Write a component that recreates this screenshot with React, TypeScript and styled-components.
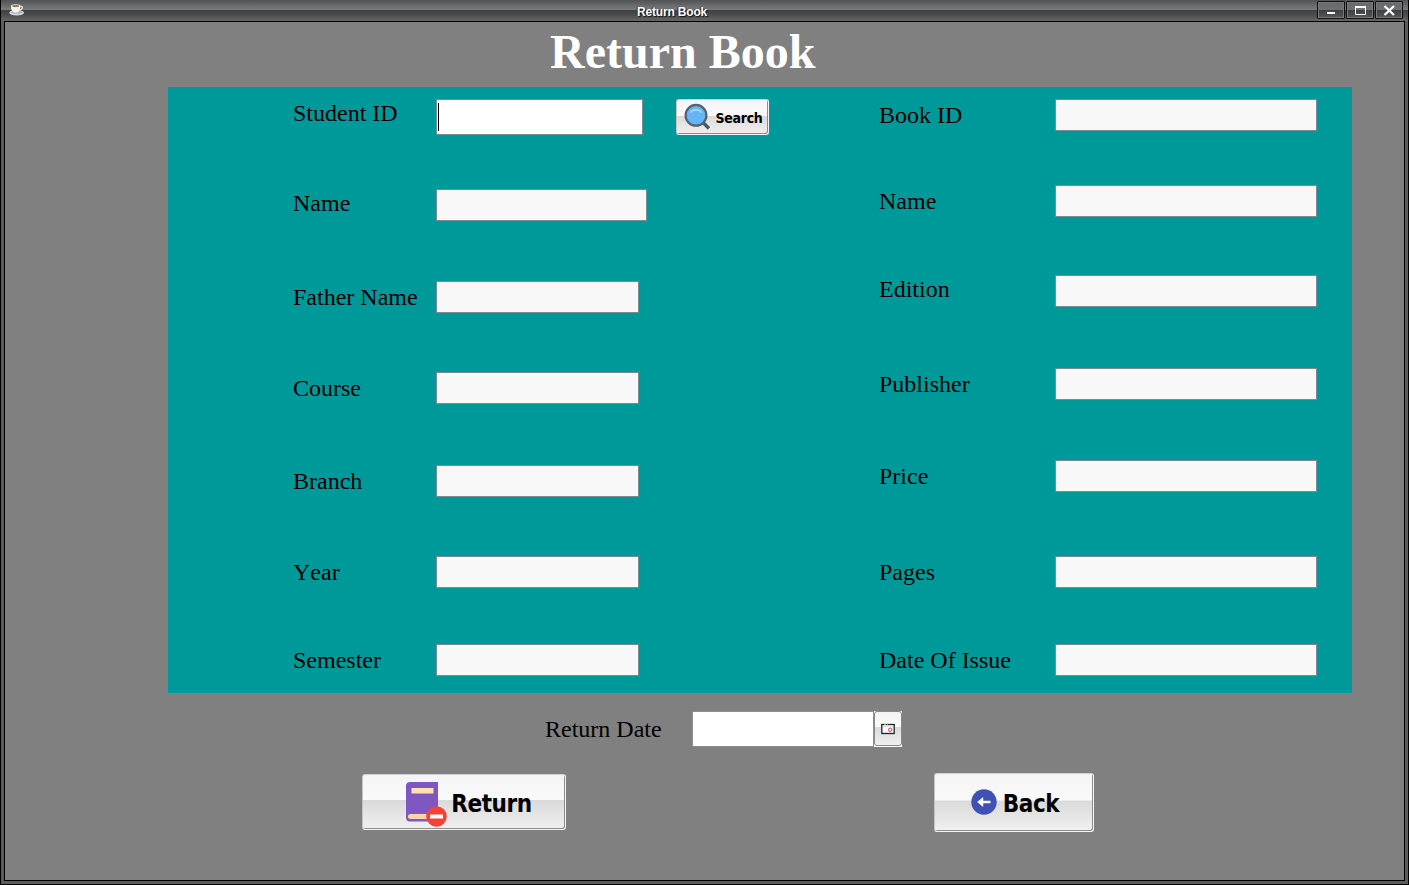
import React from "react";
import styled, { createGlobalStyle } from "styled-components";

const GlobalStyle = createGlobalStyle`
  * { box-sizing: border-box; }
  html, body { margin: 0; padding: 0; overflow: hidden; }
`;

const Window = styled.div`
  display: flex;
  flex-direction: column;
  width: 1409px;
  height: 885px;
  border: solid #000;
  border-width: 0 1px 1px 1px;
  background: #5c5c5c;
  font-kerning: none;
`;

const TitleBar = styled.header`
  display: grid;
  grid-template-columns: 629px 1fr auto;
  height: 21px;
  flex: none;
  padding: 1px 5px 0 7px;
  background: linear-gradient(#505254 0, #77797a 9px, #797b7c 10px, #3f4143 10px, #47494b 14px, #646668 21px);
`;

const WindowTitle = styled.div`
  padding-top: 1px;
  font: bold 12px/21px "Liberation Sans", Arial, sans-serif;
  font-kerning: none;
  letter-spacing: -0.18px;
  color: #fff;
  text-shadow: 1px 1px 1px #111, -1px 0 1px #333;
`;

const WindowButtons = styled.div`
  display: flex;
  justify-content: flex-end;
  gap: 1px;
`;

const WindowButton = styled.button`
  width: 28px;
  height: 18px;
  padding: 0;
  border: 1px solid #111;
  border-radius: 1px;
  box-shadow: inset 0 0 0 1px #77797b;
  background: linear-gradient(#66686a 0, #6f7173 8px, #3d3f41 8px, #55575a 100%);
  svg { display: block; }
`;

const Content = styled.main`
  display: flex;
  flex-direction: column;
  flex: 1;
  margin: 0 3px 3px;
  border: 1px solid #000;
  background: #808080;
`;

const Heading = styled.h1`
  margin: 0;
  height: 65px;
  padding: 2px 0 0 545px;
  font: bold 48px/56px "Liberation Serif", "Times New Roman", serif;
  color: #fff;
`;

const Panel = styled.section`
  display: grid;
  grid-template-columns: 586px 1fr;
  width: 1184px;
  height: 606px;
  margin-left: 163px;
  padding: 12px 0 0 125px;
  background: #009999;
`;

const Column = styled.div`
  display: flex;
  flex-direction: column;
`;

const Row = styled.div<{ $pitch: number; $label: number }>`
  display: grid;
  grid-template-columns: ${(p) => p.$label}px auto auto;
  justify-content: start;
  align-items: start;
  height: ${(p) => p.$pitch}px;
`;

const Label = styled.label<{ $drop?: number }>`
  padding-top: ${(p) => p.$drop ?? 0}px;
  font: 24px/28px "Liberation Serif", "Times New Roman", serif;
  font-kerning: none;
  color: #000;
  white-space: nowrap;
`;

const Field = styled.div<{ $w: number; $h?: number; $active?: boolean }>`
  width: ${(p) => p.$w}px;
  height: ${(p) => p.$h ?? 32}px;
  padding: 3px 1px;
  border: 1px solid #7b8c8c;
  background: ${(p) => (p.$active ? "#fff" : "#f8f8f8")};
`;

const Caret = styled.div`
  width: 1px;
  height: 28px;
  background: #000;
`;

const Button = styled.button<{ $w: number; $h: number; $font?: number; $gap?: number }>`
  display: flex;
  align-items: center;
  justify-content: center;
  gap: ${(p) => p.$gap ?? 0}px;
  width: ${(p) => p.$w}px;
  height: ${(p) => p.$h}px;
  padding: 0;
  border: 1px solid #f4f4f4;
  border-left-color: #c4c4c4;
  border-top-color: #d0d0d0;
  border-radius: 3px;
  box-shadow: inset -1px -1px 0 #8c8c8c;
  background: linear-gradient(#f4f4f4 0, #fafafa 46%, #dadada 47%, #f0f0f0 100%);
  font: bold ${(p) => p.$font ?? 14}px/1 "DejaVu Sans Condensed", Tahoma, sans-serif;
  letter-spacing: -0.4px;
  color: #000;
  svg { flex: none; }
`;

const SearchButton = styled(Button)`
  margin-left: 33px;
  padding: 2px 0 0 1px;
  letter-spacing: -0.3px;
`;

const DateRow = styled.div`
  display: grid;
  grid-template-columns: 147px 182px 28px;
  align-items: start;
  margin: 18px 0 0 540px;
  height: 62px;
`;

const DateField = styled.div`
  height: 36px;
  border: 1px solid #8e8e8e;
  background: #fff;
`;

const DateCorner = styled.div`
  height: 36px;
  background: #fff;
`;

const DateButton = styled(Button)`
  border-color: #888;
  box-shadow: none;
`;

const Actions = styled.div`
  display: flex;
  align-items: flex-start;
  justify-content: space-between;
  width: 732px;
  margin-left: 357px;
`;

const ReturnButton = styled(Button)`
  margin-top: 1px;
  padding: 3px 0 0 9px;
`;

const BackButton = styled(Button)`
  padding: 2px 0 0 2px;
`;

const JavaCup = () => (
  <svg width="18" height="18" viewBox="0 0 18 18">
    <ellipse cx="8.6" cy="11.8" rx="7.4" ry="2.8" fill="#d9dadd" />
    <ellipse cx="8.8" cy="11.2" rx="5.5" ry="1.6" fill="#aeb0b5" />
    <path d="M3 4.8h9.4c.2 3.8-1.4 7-4.6 7S2.8 8.8 3 4.8z" fill="#f3f3f1" />
    <ellipse cx="7.7" cy="4.9" rx="4.7" ry="1.6" fill="#f2efe8" />
    <ellipse cx="7.6" cy="5" rx="3.5" ry="1" fill="#987448" />
    <path d="M12 5.3c3.6-.6 3 3.4-1 3.7" fill="none" stroke="#ececec" strokeWidth="1.2" />
  </svg>
);

const SearchIcon = () => (
  <svg width="28" height="30" viewBox="0 0 28 30">
    <path d="M18.5 19L25 25.5" stroke="#455a64" strokeWidth="3.4" />
    <path d="M17.5 18l2.5 2.5" stroke="#616161" strokeWidth="2" />
    <circle cx="12" cy="12.3" r="10.4" fill="#64b5f6" stroke="#56606b" strokeWidth="2.2" />
    <path d="M6.5 9.6C9 6 15 6 17.5 9.6" fill="none" stroke="#a9d7fb" strokeWidth="1.7" />
  </svg>
);

const BookIcon = () => (
  <svg width="42" height="46" viewBox="0 0 42 46">
    <path d="M5 1h28v39.5H5A4 4 0 0 1 1 36.5V5a4 4 0 0 1 4-4z" fill="#7e57c2" />
    <rect x="6.5" y="7" width="22" height="5.5" fill="#ffe0b2" />
    <path d="M5.5 33H28v5H5.5a2.5 2.5 0 0 1 0-5z" fill="#ffd3a6" />
    <circle cx="31.5" cy="35.5" r="10.3" fill="#f44336" />
    <rect x="25" y="33.5" width="13" height="4" fill="#fff" />
  </svg>
);

const BackIcon = () => (
  <svg width="26" height="30" viewBox="0 0 26 30">
    <circle cx="13" cy="13" r="12.7" fill="#3f51b5" />
    <path d="M6.2 13l6-5v3.7h7.3v2.6h-7.3V18z" fill="#fff" />
  </svg>
);

const CalendarIcon = () => (
  <svg width="14" height="12" viewBox="0 0 14 12">
    <rect x=".8" y="1.5" width="12.4" height="9" fill="#f5f7fa" stroke="#202228" strokeWidth="1.3" />
    <path d="M2 3h10" stroke="#c9dced" />
    <path d="M3 1.5h2M6 1.5h1" stroke="#b28b54" />
    <circle cx="9.2" cy="6.8" r="1.7" fill="none" stroke="#e8403e" />
  </svg>
);

type Entry = { label: string; drop: number; width: number; pitch: number };

const student: Entry[] = [
  { label: "Name", drop: 0, width: 211, pitch: 92 },
  { label: "Father Name", drop: 2, width: 203, pitch: 91 },
  { label: "Course", drop: 2, width: 203, pitch: 93 },
  { label: "Branch", drop: 2, width: 203, pitch: 91 },
  { label: "Year", drop: 2, width: 203, pitch: 88 },
  { label: "Semester", drop: 2, width: 203, pitch: 32 },
];

const book: Entry[] = [
  { label: "Book ID", drop: 2, width: 262, pitch: 86 },
  { label: "Name", drop: 2, width: 262, pitch: 90 },
  { label: "Edition", drop: 0, width: 262, pitch: 93 },
  { label: "Publisher", drop: 2, width: 262, pitch: 92 },
  { label: "Price", drop: 2, width: 262, pitch: 96 },
  { label: "Pages", drop: 2, width: 262, pitch: 88 },
  { label: "Date Of Issue", drop: 2, width: 262, pitch: 32 },
];

const Entries = ({ items, labelWidth }: { items: Entry[]; labelWidth: number }) => (
  <>
    {items.map((e) => (
      <Row key={e.label} $pitch={e.pitch} $label={labelWidth}>
        <Label $drop={e.drop}>{e.label}</Label>
        <Field $w={e.width} />
      </Row>
    ))}
  </>
);

export default function App() {
  return (
    <>
      <GlobalStyle />
      <Window>
        <TitleBar>
          <JavaCup />
          <WindowTitle>Return Book</WindowTitle>
          <WindowButtons>
            <WindowButton aria-label="Minimize">
              <svg width="26" height="16"><path d="M9 11h8" stroke="#fff" strokeWidth="2" /></svg>
            </WindowButton>
            <WindowButton aria-label="Maximize">
              <svg width="26" height="16">
                <path d="M8.5 5v7.5h10V5" fill="none" stroke="#fff" />
                <path d="M8 5h11" stroke="#fff" strokeWidth="2" />
              </svg>
            </WindowButton>
            <WindowButton aria-label="Close">
              <svg width="26" height="16"><path d="M8.5 4l9.500 9M18 4l-9.500 9" stroke="#fff" strokeWidth="2.3" /></svg>
            </WindowButton>
          </WindowButtons>
        </TitleBar>
        <Content>
          <Heading>Return Book</Heading>
          <Panel>
            <Column>
              <Row $pitch={90} $label={143}>
                <Label>Student ID</Label>
                <Field $w={207} $h={36} $active>
                  <Caret />
                </Field>
                <SearchButton $w={93} $h={36} $gap={4}>
                  <SearchIcon />
                  Search
                </SearchButton>
              </Row>
              <Entries items={student} labelWidth={143} />
            </Column>
            <Column>
              <Entries items={book} labelWidth={176} />
            </Column>
          </Panel>
          <DateRow>
            <Label $drop={4}>Return Date</Label>
            <DateField />
            <DateCorner>
              <DateButton $w={28} $h={35} aria-label="Pick date">
                <CalendarIcon />
              </DateButton>
            </DateCorner>
          </DateRow>
          <Actions>
            <ReturnButton $w={204} $h={56} $font={24} $gap={4}>
              <BookIcon />
              Return
            </ReturnButton>
            <BackButton $w={160} $h={59} $font={24} $gap={6}>
              <BackIcon />
              Back
            </BackButton>
          </Actions>
        </Content>
      </Window>
    </>
  );
}
